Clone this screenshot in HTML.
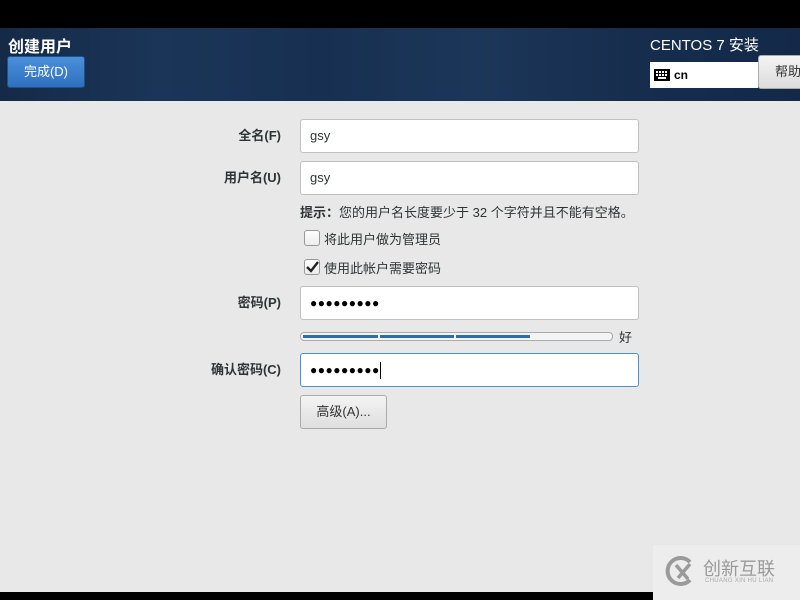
<!DOCTYPE html>
<html><head><meta charset="utf-8"><style>
*{margin:0;padding:0;box-sizing:border-box}
body{width:800px;height:600px;overflow:hidden;background:#e8e8e8;font-family:"Liberation Sans","Noto Sans CJK SC",sans-serif;position:relative;font-size:13px;color:#2e3436}
.top{position:absolute;left:0;top:0;width:800px;height:28px;background:#000}
.hdr{position:absolute;left:0;top:28px;width:800px;height:73px;background:linear-gradient(90deg,#152a47 0%,#1b3558 20%,#173052 40%,#1c3659 60%,#162d4d 80%,#14294a 100%)}
.title{position:absolute;left:8px;top:33px;color:#fff;font-size:16px;font-weight:bold}
.done{position:absolute;left:7px;top:56px;width:78px;height:32px;background:linear-gradient(#4a90d9,#2f6fc0);border:1px solid #1e4f8f;border-radius:3px;color:#fff;text-align:center;line-height:30px;font-size:13px}
.cent{position:absolute;left:650px;top:34px;color:#fff;font-size:15px}
.kb{position:absolute;left:650px;top:62px;width:108px;height:26px;background:#fff;font-weight:bold;font-size:12px;padding-left:24px;line-height:26px;color:#000}
.help{position:absolute;left:758px;top:55px;width:60px;height:34px;background:linear-gradient(#f4f4f4,#dcdcdc);border:1px solid #aaa;border-radius:3px;color:#333;line-height:32px;padding-left:16px;font-size:13px}
.lbl{position:absolute;right:519px;font-weight:bold;font-size:13px;color:#2e3436}
.in{position:absolute;left:300px;width:339px;height:34px;background:#fff;border:1px solid #bfc1bd;border-radius:3px;padding-left:9px;line-height:32px;font-size:13px;color:#2e3436}
.dots{letter-spacing:0.5px;font-size:12px;color:#000}
.chk{position:absolute;left:304px;width:16px;height:16px;border:1px solid #999;border-radius:3px;background:linear-gradient(#fff,#ececec)}
.bot{position:absolute;left:0;top:592px;width:653px;height:8px;background:#000}
</style></head><body>
<div class="top"></div>
<div class="hdr"></div>
<div class="title">创建用户</div>
<div class="done">完成(D)</div>
<div class="cent">CENTOS 7 安装</div>
<div class="kb"><svg style="position:absolute;left:4px;top:7px" width="16" height="12"><rect width="16" height="12" fill="#000"/><g fill="#fff"><rect x="2" y="2" width="2" height="2"/><rect x="5" y="2" width="2" height="2"/><rect x="8" y="2" width="2" height="2"/><rect x="11" y="2" width="2" height="2"/><rect x="2" y="5" width="2" height="2"/><rect x="5" y="5" width="2" height="2"/><rect x="8" y="5" width="2" height="2"/><rect x="11" y="5" width="2" height="2"/><rect x="4" y="8" width="8" height="2"/></g></svg>cn</div>
<div class="help">帮助</div>

<div class="lbl" style="top:125px">全名(F)</div>
<div class="in" style="top:119px">gsy</div>
<div class="lbl" style="top:167px">用户名(U)</div>
<div class="in" style="top:161px">gsy</div>
<div style="position:absolute;left:300px;top:202px;font-size:13px"><b>提示：</b>您的用户名长度要少于 32 个字符并且不能有空格。</div>
<div class="chk" style="top:230px"></div>
<div style="position:absolute;left:324px;top:229px">将此用户做为管理员</div>
<div class="chk" style="top:259px"><svg width="14" height="14" style="position:absolute;left:0;top:0"><path d="M2 7 L6 11 L13 2" stroke="#222" stroke-width="2.4" fill="none"/></svg></div>
<div style="position:absolute;left:324px;top:258px">使用此帐户需要密码</div>
<div class="lbl" style="top:292px">密码(P)</div>
<div class="in dots" style="top:286px">●●●●●●●●●</div>
<div style="position:absolute;left:300px;top:332px;width:313px;height:9px;border:1px solid #aaa;border-radius:4px;background:#f4f4f4"></div>
<div style="position:absolute;left:303px;top:335px;width:75px;height:3px;background:#2f6da8"></div>
<div style="position:absolute;left:380px;top:335px;width:74px;height:3px;background:#2f6da8"></div>
<div style="position:absolute;left:456px;top:335px;width:74px;height:3px;background:#2f6da8"></div>
<div style="position:absolute;left:619px;top:327px;font-size:13px">好</div>
<div class="lbl" style="top:359px">确认密码(C)</div>
<div class="in dots" style="top:353px;border:1.5px solid #4a90d9">●●●●●●●●●<span style="display:inline-block;width:1px;height:17px;background:#000;vertical-align:middle"></span></div>
<div style="position:absolute;left:300px;top:395px;width:87px;height:34px;border:1px solid #aaa;border-radius:3px;background:linear-gradient(#f4f4f4,#dedede);text-align:center;line-height:32px;color:#333">高级(A)...</div>
<div class="bot"></div>
<div style="position:absolute;left:653px;top:545px;width:147px;height:55px;background:#ededed"></div>
<svg style="position:absolute;left:664px;top:555px" width="34" height="32"><path d="M26 7 A13 13 0 1 0 26 25" stroke="#9a9a9a" stroke-width="4" fill="none"/><path d="M12 10 L24 24 M26 9 L14 23" stroke="#9a9a9a" stroke-width="3.5"/></svg>
<div style="position:absolute;left:703px;top:555px;color:#9a9a9a;font-size:18px">创新互联</div>
<div style="position:absolute;left:705px;top:578px;color:#aaa;font-size:6px;letter-spacing:0.3px">CHUANG XIN HU LIAN</div>
</body></html>
